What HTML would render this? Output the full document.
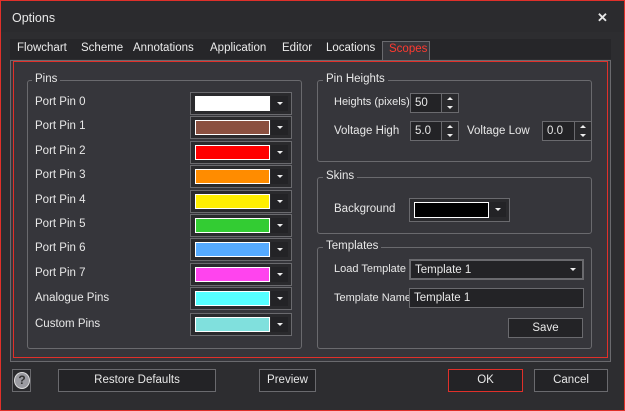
<!DOCTYPE html><html><head><style>
*{margin:0;padding:0;box-sizing:border-box}
body{width:625px;height:411px;background:#2d2d30;font-family:"Liberation Sans",sans-serif;font-size:11px;color:#e8e8e8;position:relative;overflow:hidden}
.a{position:absolute}
.win{left:0;top:0;width:625px;height:411px;border:1px solid #e0302a}
.grp{border:1px solid #6a6a6e;border-radius:3px}
.gl{background:#36363b;padding:0 3px;font-size:11.5px}
.combo{border:1px solid #6a6a6e;background:#2a2a2d;height:23px;width:102px}
.sw{position:absolute;left:4px;top:3px;width:75px;height:15px;border:1px solid #fff}
.arr{position:absolute;right:3px;top:3px;width:17px;height:15px;background:#232326}
.arr:after{content:"";position:absolute;left:6px;top:6px;border-left:3px solid transparent;border-right:3px solid transparent;border-top:3px solid #eee}
.lbl{font-size:11.5px;margin-top:1px}
.btn{border:1px solid #6a6a6e;background:#232326;text-align:center;line-height:21px;font-size:11.5px}
.inp{border:1px solid #6a6a6e;background:#232326;height:20px;padding-left:4px;line-height:18px;font-size:11.5px}
.spin{width:18px;height:20px;border:1px solid #6a6a6e;background:#2a2a2d}
.spin:before{content:"";position:absolute;left:5px;top:3px;border-left:3px solid transparent;border-right:3px solid transparent;border-bottom:3px solid #eee}
.spin:after{content:"";position:absolute;left:5px;top:12px;border-left:3px solid transparent;border-right:3px solid transparent;border-top:3px solid #eee}
.tab{top:42px;font-size:11.5px;color:#ececec}
</style></head><body>
<div class="a" style="left:0;top:0;width:625px;height:32px;background:#2b2b2e"></div>
<div class="a" style="left:12px;top:11px;font-size:12.5px">Options</div>
<div class="a" style="left:597px;top:10px;font-size:13px;font-weight:bold">✕</div>
<div class="a" style="left:10px;top:39px;width:601px;height:20px;background:#262629"></div>
<div class="a tab" style="left:17px">Flowchart</div>
<div class="a tab" style="left:81px">Scheme</div>
<div class="a tab" style="left:133px">Annotations</div>
<div class="a tab" style="left:210px">Application</div>
<div class="a tab" style="left:282px">Editor</div>
<div class="a tab" style="left:326px">Locations</div>
<div class="a" style="left:382px;top:41px;width:48px;height:20px;border:1px solid #6a6a6e;border-bottom:none;background:#36363b"></div>
<div class="a tab" style="left:389px;top:43px;color:#ff3a30">Scopes</div>
<div class="a" style="left:10px;top:60px;width:601px;height:302px;border:1px solid #6a6a6e;background:#36363b"></div>
<div class="a" style="left:13px;top:61px;width:595px;height:297px;border:1px solid #e0302a"></div>

<div class="a grp" style="left:27px;top:80px;width:275px;height:269px"></div>
<div class="a gl" style="left:32px;top:73px">Pins</div>
<div class="a grp" style="left:317px;top:80px;width:275px;height:82px"></div>
<div class="a gl" style="left:323px;top:73px">Pin Heights</div>
<div class="a grp" style="left:317px;top:177px;width:275px;height:57px"></div>
<div class="a gl" style="left:323px;top:170px">Skins</div>
<div class="a grp" style="left:317px;top:247px;width:275px;height:102px"></div>
<div class="a gl" style="left:323px;top:240px">Templates</div>

<div class="a lbl" style="left:35px;top:95px">Port Pin 0</div><div class="a combo" style="left:190px;top:92px"><div class="sw" style="background:#fff"></div><div class="arr"></div></div>
<div class="a lbl" style="left:35px;top:119px">Port Pin 1</div><div class="a combo" style="left:190px;top:116px"><div class="sw" style="background:#8b5040"></div><div class="arr"></div></div>
<div class="a lbl" style="left:35px;top:144px">Port Pin 2</div><div class="a combo" style="left:190px;top:141px"><div class="sw" style="background:#ff0000"></div><div class="arr"></div></div>
<div class="a lbl" style="left:35px;top:168px">Port Pin 3</div><div class="a combo" style="left:190px;top:165px"><div class="sw" style="background:#ff8c00"></div><div class="arr"></div></div>
<div class="a lbl" style="left:35px;top:193px">Port Pin 4</div><div class="a combo" style="left:190px;top:190px"><div class="sw" style="background:#ffee00"></div><div class="arr"></div></div>
<div class="a lbl" style="left:35px;top:217px">Port Pin 5</div><div class="a combo" style="left:190px;top:214px"><div class="sw" style="background:#33cc33"></div><div class="arr"></div></div>
<div class="a lbl" style="left:35px;top:241px">Port Pin 6</div><div class="a combo" style="left:190px;top:238px"><div class="sw" style="background:#55aaff"></div><div class="arr"></div></div>
<div class="a lbl" style="left:35px;top:266px">Port Pin 7</div><div class="a combo" style="left:190px;top:263px"><div class="sw" style="background:#ff44ee"></div><div class="arr"></div></div>
<div class="a lbl" style="left:35px;top:291px">Analogue Pins</div><div class="a combo" style="left:190px;top:287px"><div class="sw" style="background:#55ffff"></div><div class="arr"></div></div>
<div class="a lbl" style="left:35px;top:317px">Custom Pins</div><div class="a combo" style="left:190px;top:313px"><div class="sw" style="background:#80e0dd"></div><div class="arr"></div></div>

<div class="a lbl" style="left:334px;top:95px;font-size:11px">Heights (pixels)</div>
<div class="a inp" style="left:410px;top:93px;width:32px">50</div><div class="a spin" style="left:441px;top:93px"></div>
<div class="a lbl" style="left:334px;top:124px">Voltage High</div>
<div class="a inp" style="left:410px;top:121px;width:32px">5.0</div><div class="a spin" style="left:441px;top:121px"></div>
<div class="a lbl" style="left:467px;top:124px">Voltage Low</div>
<div class="a inp" style="left:542px;top:121px;width:33px">0.0</div><div class="a spin" style="left:574px;top:121px"></div>

<div class="a lbl" style="left:334px;top:202px">Background</div>
<div class="a combo" style="left:409px;top:198px;width:101px;height:24px"><div class="sw" style="background:#000;width:75px;height:16px"></div><div class="arr"></div></div>

<div class="a lbl" style="left:334px;top:262px;font-size:11px">Load Template</div>
<div class="a inp" style="left:409px;top:259px;width:175px;height:21px;line-height:18px;border-width:2px">Template 1</div>
<div class="a" style="left:570px;top:268px;border-left:3px solid transparent;border-right:3px solid transparent;border-top:3px solid #eee"></div>
<div class="a lbl" style="left:334px;top:291px;font-size:11px">Template Name</div>
<div class="a inp" style="left:409px;top:288px;width:175px;height:20px">Template 1</div>
<div class="a btn" style="left:508px;top:318px;width:75px;height:20px;line-height:18px">Save</div>

<div class="a" style="left:12px;top:369px;width:19px;height:23px;border:1px solid #6a6a6e;background:#2a2a2d"></div>
<div class="a" style="left:14px;top:372px;width:16px;height:17px;border-radius:50%;background:#9a9aa0;border:1px solid #ddd;text-align:center;font-weight:bold;font-size:12px;line-height:15px;color:#333">?</div>
<div class="a btn" style="left:58px;top:369px;width:158px;height:23px">Restore Defaults</div>
<div class="a btn" style="left:259px;top:369px;width:57px;height:23px">Preview</div>
<div class="a btn" style="left:448px;top:369px;width:75px;height:23px;border-color:#e0302a">OK</div>
<div class="a btn" style="left:534px;top:369px;width:74px;height:23px">Cancel</div>
<div class="a win"></div>
</body></html>
